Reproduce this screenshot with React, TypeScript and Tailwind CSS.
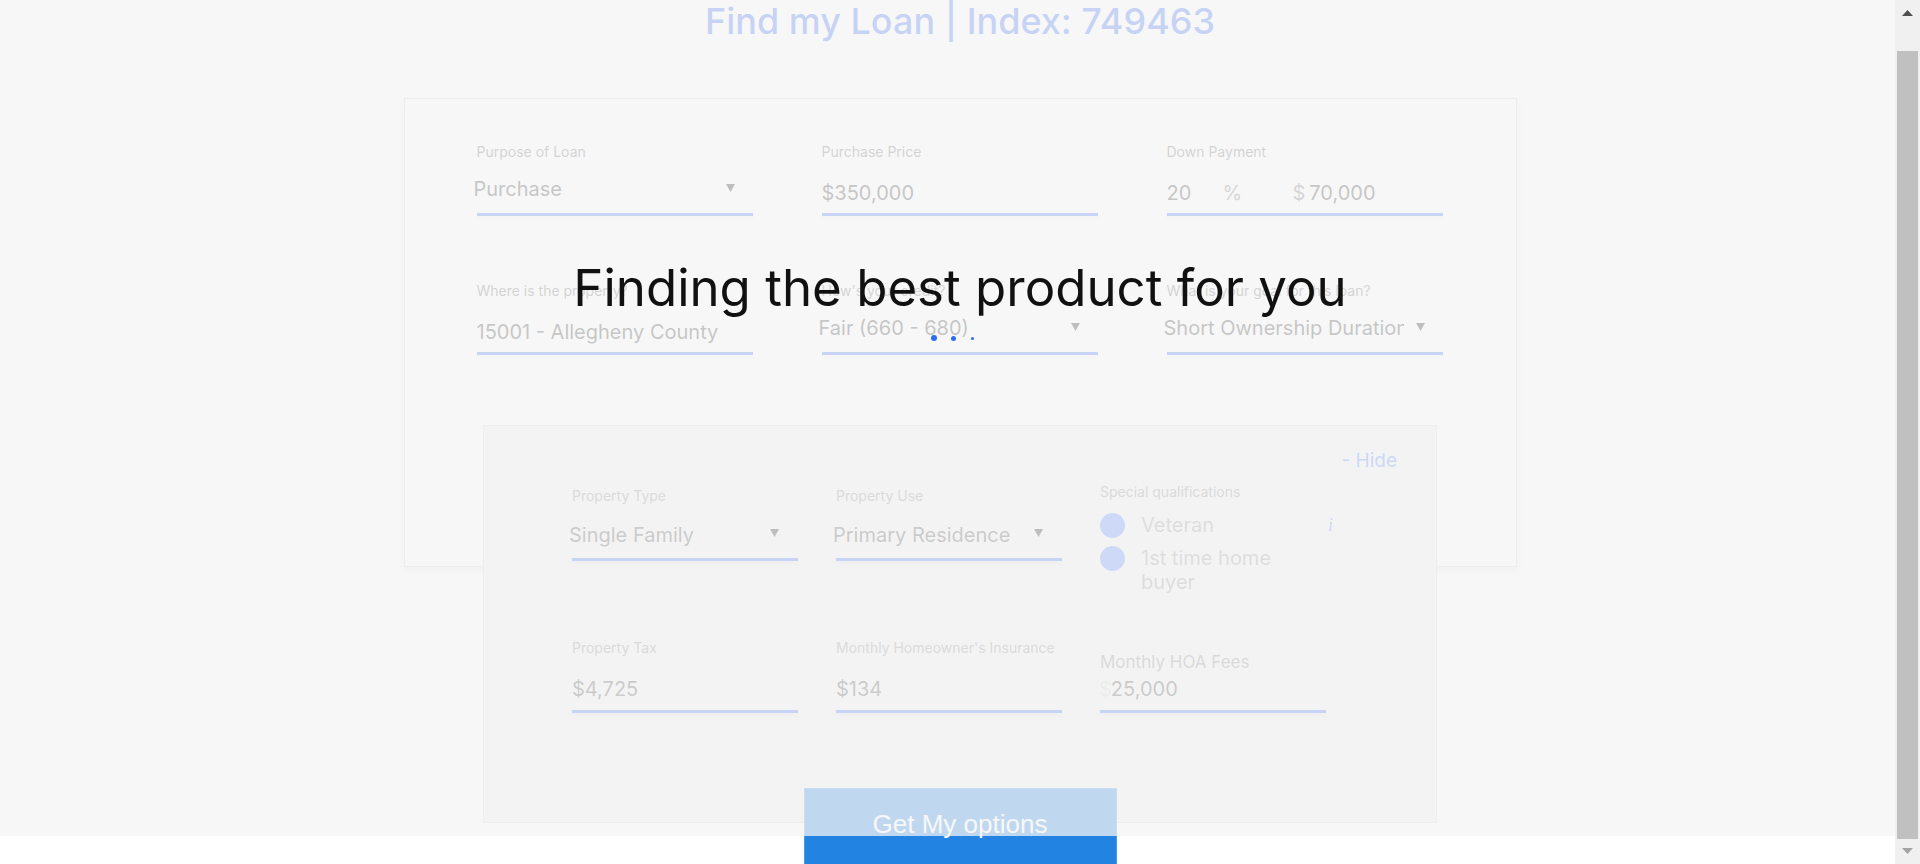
import React from 'react';

const Arrow = () => (
  <svg width="9" height="8" viewBox="0 0 9 8" className="block shrink-0">
    <path d="M0 0H9L4.5 8Z" fill="#1c1c1c" />
  </svg>
);

const Underline = () => (
  <div className="h-[3px] w-full bg-[#4474f8] shadow-[0_3px_4px_rgba(0,0,0,0.1)]" />
);

interface SelectProps {
  label: string;
  value: string;
}

interface InputProps {
  label: string;
  children: React.ReactNode;
}

const CardSelect: React.FC<SelectProps> = ({ label, value }) => (
  <div className="flex flex-col">
    <label className="h-[20px] text-[14px] leading-[20px] text-[#707070]">{label}</label>
    <div className="flex h-[51px] items-start pt-[13px]">
      <span className="-ml-[3px] mr-[12px] min-w-0 flex-1 overflow-hidden whitespace-nowrap text-[20px] leading-[28px] text-[#3c3c3c]">
        {value}
      </span>
      <span className="mr-[18px] mt-[9px]">
        <Arrow />
      </span>
    </div>
    <Underline />
  </div>
);

const CardInput: React.FC<InputProps> = ({ label, children }) => (
  <div className="flex flex-col">
    <label className="h-[20px] text-[14px] leading-[20px] text-[#707070]">{label}</label>
    <div className="flex h-[51px] items-start pt-[17px] text-[20px] leading-[28px] text-[#3c3c3c]">{children}</div>
    <Underline />
  </div>
);

const PanelSelect: React.FC<SelectProps> = ({ label, value }) => (
  <div className="flex w-[226px] flex-col">
    <label className="h-[20px] text-[14px] leading-[20px] text-[#8a8a8a]">{label}</label>
    <div className="flex h-[52px] items-start pt-[15px]">
      <span className="-ml-[3px] mr-[12px] min-w-0 flex-1 overflow-hidden whitespace-nowrap text-[20px] leading-[28px] text-[#505050]">
        {value}
      </span>
      <span className="mr-[19px] mt-[8px]">
        <Arrow />
      </span>
    </div>
    <Underline />
  </div>
);

const PanelInput: React.FC<InputProps> = ({ label, children }) => (
  <div className="flex w-[226px] flex-col">
    <label className="h-[20px] whitespace-nowrap text-[14px] leading-[20px] text-[#8a8a8a]">{label}</label>
    <div className="flex h-[52px] items-start pt-[17px] text-[20px] leading-[28px] text-[#505050]">{children}</div>
    <Underline />
  </div>
);

const Scrollbar = () => (
  <div className="flex h-[864px] w-[25px] shrink-0 flex-col items-center bg-[#f0f0f0] pt-[10px]">
    <svg width="11" height="6" viewBox="0 0 11 6" className="block">
      <path d="M5.5 0L11 6H0Z" fill="#505050" />
    </svg>
    <div className="mt-[35px] h-[788px] w-[21px] bg-[#c0c0c0]" />
    <svg width="11" height="6" viewBox="0 0 11 6" className="mt-[9px] block">
      <path d="M0 0H11L5.5 6Z" fill="#a3a3a3" />
    </svg>
  </div>
);

export default function App() {
  return (
    <div className="flex h-[864px] w-full overflow-hidden bg-white font-['Inter','Noto_Sans',sans-serif]">
      <div className="relative flex-1 overflow-hidden bg-white">
        <div className="flex flex-col items-center pl-[25px]">
          <h1 className="mt-[3px] text-[36px] font-medium leading-[37px] text-[#3f70f8]">
            Find my Loan | Index: 749463
          </h1>

          <section className="mt-[58px] w-[1113px] border border-[#d6d6d6] bg-white pb-[211px] pl-[72px] pt-[43px] shadow-[0_3px_8px_rgba(0,0,0,0.12)]">
            <div className="grid grid-cols-[276px_276px_276px] gap-x-[69px] gap-y-[65px]">
              <CardSelect label="Purpose of Loan" value="Purchase" />
              <CardInput label="Purchase Price">$350,000</CardInput>
              <CardInput label="Down Payment">
                <span className="w-[56px]">20</span>
                <span className="w-[70px] text-[#7a7a7a]">%</span>
                <span className="text-[#7a7a7a]">$</span>
                <span className="ml-[4px]">70,000</span>
              </CardInput>
              <CardInput label="Where is the property?">15001 - Allegheny County</CardInput>
              <CardSelect label="How's your credit?" value="Fair (660 - 680)" />
              <CardSelect label="What is your goal for this loan?" value="Short Ownership Duration" />
            </div>
          </section>

          <div className="relative z-10 -mt-[142px] flex h-[398px] w-[954px] flex-col border border-[#d8d8d8] bg-[#f0f0f0]">
            <div className="flex justify-end pr-[39px] pt-[23px]">
              <button className="text-[19px] leading-[24px] text-[#5480fa]">- Hide</button>
            </div>

            <div className="mt-[13px] flex h-[152px] items-start gap-[38px] pl-[88px]">
              <PanelSelect label="Property Type" value="Single Family" />
              <PanelSelect label="Property Use" value="Primary Residence" />
              <div className="-mt-[4px] flex flex-col">
                <span className="h-[20px] text-[14px] leading-[20px] text-[#8a8a8a]">Special qualifications</span>
                <div className="mt-[11px] flex flex-col gap-[8px]">
                  <div className="flex items-start">
                    <span className="h-[25px] w-[25px] shrink-0 rounded-full bg-[#5a88fa]" />
                    <span className="ml-[16px] w-[150px] text-[20px] leading-[24px] text-[#999999]">Veteran</span>
                    <span className="ml-[37px] mt-[2px] font-['Liberation_Serif',serif] text-[18px] italic leading-[20px] text-[#5a80f0]">
                      i
                    </span>
                  </div>
                  <div className="flex items-start">
                    <span className="h-[25px] w-[25px] shrink-0 rounded-full bg-[#5a88fa]" />
                    <span className="ml-[16px] w-[150px] text-[20px] leading-[24px] text-[#999999]">1st time home buyer</span>
                  </div>
                </div>
              </div>
            </div>

            <div className="flex items-start gap-[38px] pl-[88px]">
              <PanelInput label="Property Tax">$4,725</PanelInput>
              <PanelInput label="Monthly Homeowner's Insurance">$134</PanelInput>
              <div className="flex w-[226px] flex-col">
                <label className="mt-[14px] h-[20px] text-[17px] leading-[20px] text-[#8a8a8a]">Monthly HOA Fees</label>
                <div className="flex h-[38px] items-start pt-[3px] text-[20px] leading-[28px] text-[#505050]">
                  <span className="-ml-[1px] text-[#d4d4d4]">$</span>
                  <span className="-ml-[1px]">25,000</span>
                </div>
                <Underline />
              </div>
            </div>
          </div>

          <button className="relative z-10 -mt-[35px] flex h-[100px] w-[313px] items-start justify-center border border-[#4a98e8] bg-[#2383e2] pt-[20px] font-['Liberation_Sans',Arial,sans-serif] text-[26px] leading-[30px] text-white">
            Get My options
          </button>
        </div>

        <div className="absolute left-0 right-0 top-0 z-20 flex h-[836px] flex-col items-center bg-[rgba(244,244,244,0.75)] pl-[25px] pt-[262px]">
          <h2 className="whitespace-nowrap text-[51px] font-normal leading-[51px] text-[#111111]">
            Finding the best product for you
          </h2>
          <div className="mr-[16px] mt-[22px] flex h-[6px] items-center">
            <span className="h-[6px] w-[6px] rounded-full bg-[#2f6cf5]" />
            <span className="ml-[14px] h-[5px] w-[5px] rounded-full bg-[#2f6cf5]" />
            <span className="ml-[15px] h-[3px] w-[3px] rounded-full bg-[#2f6cf5]" />
          </div>
        </div>
      </div>
      <Scrollbar />
    </div>
  );
}
